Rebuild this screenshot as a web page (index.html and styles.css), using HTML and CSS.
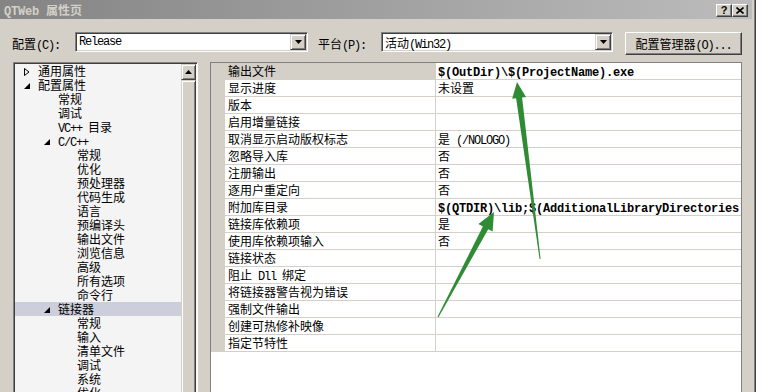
FILE: index.html
```
<!DOCTYPE html>
<html lang="zh-CN">
<head>
  <meta charset="UTF-8" />
  <title>QTWeb 属性页</title>
  <link rel="stylesheet" href="styles.css">
</head>
<body>

<div class="win">
  <div class="titlebar">
    <span class="title"><span class="en">QTWeb </span>属性页</span>
    <div class="caps">
      <span class="cap help">?</span>
      <span class="cap">
        <svg width="8" height="7" viewBox="0 0 8 7"><path d="M0.5 0.5 L7.5 6.5 M7.5 0.5 L0.5 6.5" stroke="#000" stroke-width="1.6"/></svg>
      </span>
    </div>
  </div>

  <div class="toolbar">
    <span class="lbl">配置<span class="en">(C):</span></span>
    <div class="combo c1">
      <span class="cval en">Release</span>
      <span class="drop"><svg width="7" height="4" viewBox="0 0 7 4"><path d="M0 0 H7 L3.5 4 Z" fill="#000"/></svg></span>
    </div>
    <span class="lbl l2">平台<span class="en">(P):</span></span>
    <div class="combo c2">
      <span class="cval">活动<span class="en">(Win32)</span></span>
      <span class="drop"><svg width="7" height="4" viewBox="0 0 7 4"><path d="M0 0 H7 L3.5 4 Z" fill="#000"/></svg></span>
    </div>
    <button class="btn">配置管理器<span class="en">(O)...</span></button>
  </div>

  <div class="main">
    <div class="tree">
      <div class="items">
        <div class="ti l0"><i class="tw"><svg width="6" height="8" viewBox="0 0 6 8"><path d="M0.5 0.5 L5 4 L0.5 7.5 Z" fill="none" stroke="#000"/></svg></i>通用属性</div>
        <div class="ti l0"><i class="tw"><svg class="open" width="6" height="6" viewBox="0 0 6 6"><path d="M6 0 V6 H0 Z" fill="#000"/></svg></i>配置属性</div>
        <div class="ti l1">常规</div>
        <div class="ti l1">调试</div>
        <div class="ti l1"><span class="en">VC++ </span>目录</div>
        <div class="ti l1"><i class="tw"><svg class="open" width="6" height="6" viewBox="0 0 6 6"><path d="M6 0 V6 H0 Z" fill="#000"/></svg></i><span class="en">C/C++</span></div>
        <div class="ti l2">常规</div>
        <div class="ti l2">优化</div>
        <div class="ti l2">预处理器</div>
        <div class="ti l2">代码生成</div>
        <div class="ti l2">语言</div>
        <div class="ti l2">预编译头</div>
        <div class="ti l2">输出文件</div>
        <div class="ti l2">浏览信息</div>
        <div class="ti l2">高级</div>
        <div class="ti l2">所有选项</div>
        <div class="ti l2">命令行</div>
        <div class="ti l1 sel"><i class="tw"><svg class="open" width="6" height="6" viewBox="0 0 6 6"><path d="M6 0 V6 H0 Z" fill="#000"/></svg></i>链接器</div>
        <div class="ti l2">常规</div>
        <div class="ti l2">输入</div>
        <div class="ti l2">清单文件</div>
        <div class="ti l2">调试</div>
        <div class="ti l2">系统</div>
        <div class="ti l2">优化</div>
      </div>
      <div class="sbar">
        <div class="sb-up"><svg width="7" height="4" viewBox="0 0 7 4"><path d="M0 4 H7 L3.5 0 Z" fill="#000"/></svg></div>
        <div class="sb-thumb"></div>
      </div>
    </div>

    <div class="grid">
      <div class="row"><span class="gut"></span><span class="k sel">输出文件</span><span class="v"><span class="bv">$(OutDir)\$(ProjectName).exe</span></span></div>
      <div class="row"><span class="gut"></span><span class="k">显示进度</span><span class="v">未设置</span></div>
      <div class="row"><span class="gut"></span><span class="k">版本</span><span class="v"></span></div>
      <div class="row"><span class="gut"></span><span class="k">启用增量链接</span><span class="v"></span></div>
      <div class="row"><span class="gut"></span><span class="k">取消显示启动版权标志</span><span class="v">是<span class="en"> (/NOLOGO)</span></span></div>
      <div class="row"><span class="gut"></span><span class="k">忽略导入库</span><span class="v">否</span></div>
      <div class="row"><span class="gut"></span><span class="k">注册输出</span><span class="v">否</span></div>
      <div class="row"><span class="gut"></span><span class="k">逐用户重定向</span><span class="v">否</span></div>
      <div class="row"><span class="gut"></span><span class="k">附加库目录</span><span class="v"><span class="bv">$(QTDIR)\lib;$(AdditionalLibraryDirectories)</span></span></div>
      <div class="row"><span class="gut"></span><span class="k">链接库依赖项</span><span class="v">是</span></div>
      <div class="row"><span class="gut"></span><span class="k">使用库依赖项输入</span><span class="v">否</span></div>
      <div class="row"><span class="gut"></span><span class="k">链接状态</span><span class="v"></span></div>
      <div class="row"><span class="gut"></span><span class="k">阻止<span class="en"> Dll </span>绑定</span><span class="v"></span></div>
      <div class="row"><span class="gut"></span><span class="k">将链接器警告视为错误</span><span class="v"></span></div>
      <div class="row"><span class="gut"></span><span class="k">强制文件输出</span><span class="v"></span></div>
      <div class="row"><span class="gut"></span><span class="k">创建可热修补映像</span><span class="v"></span></div>
      <div class="row"><span class="gut"></span><span class="k">指定节特性</span><span class="v"></span></div>
    </div>
  </div>
</div>

<!-- annotation arrows drawn over the dialog -->
<svg class="marks" width="772" height="392" viewBox="0 0 772 392">
  <polygon points="517,82 526,97 522.1,97.5 540.6,259 539.6,259 516.1,98.3 512.2,98.8" />
  <polygon points="494,212 492.6,231.6 488.2,229.3 438.5,317.3 437.5,316.7 482.9,226.5 478.4,224.1" />
</svg>

</body>
</html>
```

FILE: styles.css
```
* {
  box-sizing: border-box;
}
body {
  margin: 0;
  width: 772px;
  height: 392px;
  overflow: hidden;
  position: relative;
  background: #ffffff;
  font-family: "Noto Sans CJK SC", sans-serif;
  font-size: 12px;
  color: #000;
}
.en {
  font-family: "Liberation Mono", monospace;
  font-size: 12px;
  letter-spacing: -1.2px;
  white-space: pre;
}
.win {
  width: 756px;
  height: 392px;
  background: #d4d0c8;
  border-right: 1px solid #404040;
  box-shadow: inset -1px 0 #808080;
  display: flex;
  flex-direction: column;
}

/* title bar */
.titlebar {
  height: 19px;
  margin-right: 3px;
  background: linear-gradient(to right, #848484, #bcbcbc);
  display: flex;
  justify-content: space-between;
}
.title {
  color: #d4d0c8;
  font-weight: bold;
  padding-left: 4px;
  line-height: 19px;
}
.title .en {
  letter-spacing: -0.2px;
}
.caps {
  display: flex;
  padding: 4px 4px 0 0;
}
.cap {
  width: 16px;
  height: 13px;
  background: #d4d0c8;
  border: 1px solid;
  border-color: #ffffff #404040 #404040 #ffffff;
  box-shadow: inset -1px -1px #808080;
  display: flex;
  align-items: center;
  justify-content: center;
}
.help {
  font-family: "Liberation Sans", sans-serif;
  font-weight: bold;
  font-size: 11px;
  line-height: 11px;
}

/* config row */
.toolbar {
  display: flex;
  align-items: flex-start;
  margin-top: 13px;
  height: 23px;
  padding-left: 12px;
}
.lbl {
  line-height: 23px;
  white-space: nowrap;
}
.lbl.l2 {
  margin-left: 10px;
}
.combo {
  height: 20px;
  margin-left: 15px;
  background: #ffffff;
  border: 1px solid;
  border-color: #808080 #ffffff #ffffff #808080;
  box-shadow: inset 1px 1px #404040, inset -1px -1px #d4d0c8;
  display: flex;
  padding: 1px 1px 1px 2px;
}
.c1 {
  width: 233px;
}
.c2 {
  width: 232px;
}
.cval {
  flex: 1;
  line-height: 17px;
  padding-left: 1px;
  white-space: nowrap;
}
.drop {
  width: 16px;
  height: 16px;
  background: #d4d0c8;
  border: 1px solid;
  border-color: #d4d0c8 #404040 #404040 #d4d0c8;
  box-shadow: inset 1px 1px #ffffff, inset -1px -1px #808080;
  display: flex;
  align-items: center;
  justify-content: center;
}
.btn {
  margin-left: 12px;
  width: 117px;
  height: 23px;
  padding: 0;
  background: #d4d0c8;
  border: 1px solid;
  border-color: #ffffff #404040 #404040 #ffffff;
  box-shadow: inset -1px -1px #808080;
  font-family: "Noto Sans CJK SC", sans-serif;
  font-size: 12px;
  color: #000;
  white-space: nowrap;
}

/* main area */
.main {
  display: flex;
  margin-top: 7px;
  padding-left: 13px;
  flex: 1;
  min-height: 0;
}
.tree {
  width: 185px;
  height: 340px;
  background: #f4f4f4;
  border: 1px solid;
  border-color: #808080 #ffffff #ffffff #808080;
  box-shadow: inset 1px 1px #404040;
  padding: 1px;
  display: flex;
}
.items {
  flex: 1;
  overflow: hidden;
}
.ti {
  height: 14px;
  line-height: 14px;
  white-space: nowrap;
}
.ti.l0 {
  padding-left: 23px;
}
.ti.l1 {
  padding-left: 43px;
}
.ti.l2 {
  padding-left: 62px;
}
.ti.sel {
  background: #cccedb;
}
.tw {
  display: inline-block;
  width: 14px;
  height: 14px;
  margin-left: -14px;
  vertical-align: top;
  padding-top: 4px;
}
.tw svg {
  display: block;
}
.tw svg.open {
  margin-top: 1px;
}
.sbar {
  width: 15px;
  display: flex;
  flex-direction: column;
}
.sb-up,
.sb-thumb {
  background: #d4d0c8;
  border: 1px solid;
  border-color: #d4d0c8 #404040 #404040 #d4d0c8;
  box-shadow: inset 1px 1px #ffffff, inset -1px -1px #808080;
}
.sb-up {
  height: 16px;
  display: flex;
  align-items: center;
  justify-content: center;
}
.sb-thumb {
  flex: 1;
}

/* property grid */
.grid {
  width: 532px;
  height: 340px;
  margin-left: 12px;
  background: #ffffff;
  border: 1px solid #808080;
  border-bottom: 0;
}
.row {
  display: flex;
  height: 17px;
}
.gut {
  width: 14px;
  background: #d4d0c8;
}
.k {
  width: 211px;
  padding-left: 3px;
  line-height: 16px;
  border-right: 1px solid #d4d0c8;
  border-bottom: 1px solid #d4d0c8;
  white-space: nowrap;
}
.k.sel {
  background: #d4d0c8;
}
.v {
  flex: 1;
  padding-left: 2px;
  line-height: 16px;
  border-bottom: 1px solid #d4d0c8;
  white-space: nowrap;
  overflow: hidden;
}
.bv {
  font-family: "Liberation Mono", monospace;
  font-weight: bold;
  font-size: 12px;
  letter-spacing: -0.2px;
}

/* annotation */
.marks {
  position: absolute;
  left: 0;
  top: 0;
  pointer-events: none;
}
.marks polygon {
  fill: #2f8b34;
}
```
